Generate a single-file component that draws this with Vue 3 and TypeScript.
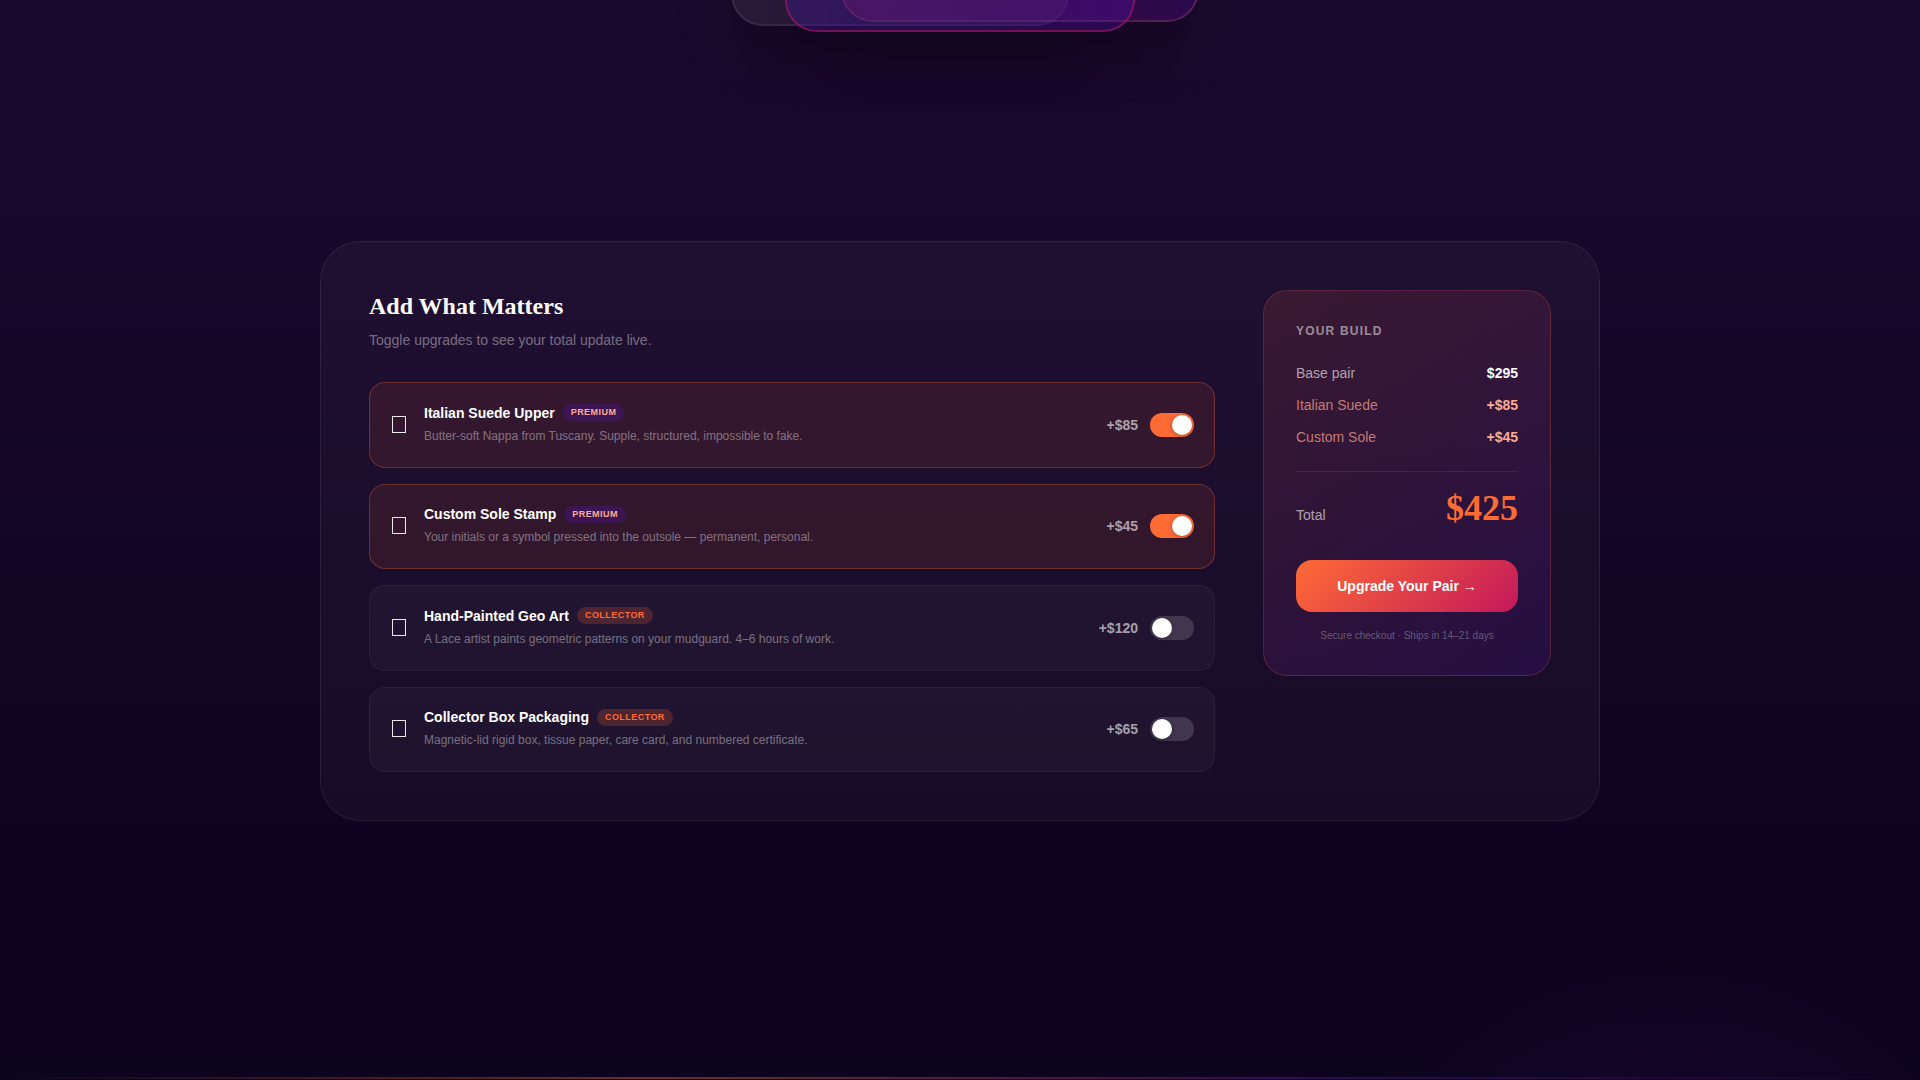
<script setup lang="ts">
import { computed, ref } from 'vue'

type Tier = 'Premium' | 'Collector'

interface Upgrade {
  id: string
  name: string
  short: string
  tier: Tier
  description: string
  price: number
  selected: boolean
}

const basePrice = 295

const upgrades = ref<Upgrade[]>([
  {
    id: 'suede',
    name: 'Italian Suede Upper',
    short: 'Italian Suede',
    tier: 'Premium',
    description: 'Butter-soft Nappa from Tuscany. Supple, structured, impossible to fake.',
    price: 85,
    selected: true,
  },
  {
    id: 'sole',
    name: 'Custom Sole Stamp',
    short: 'Custom Sole',
    tier: 'Premium',
    description: 'Your initials or a symbol pressed into the outsole — permanent, personal.',
    price: 45,
    selected: true,
  },
  {
    id: 'art',
    name: 'Hand-Painted Geo Art',
    short: 'Geo Art',
    tier: 'Collector',
    description: 'A Lace artist paints geometric patterns on your mudguard. 4–6 hours of work.',
    price: 120,
    selected: false,
  },
  {
    id: 'box',
    name: 'Collector Box Packaging',
    short: 'Collector Box',
    tier: 'Collector',
    description: 'Magnetic-lid rigid box, tissue paper, care card, and numbered certificate.',
    price: 65,
    selected: false,
  },
])

const chosen = computed(() => upgrades.value.filter((u) => u.selected))
const total = computed(() => chosen.value.reduce((sum, u) => sum + u.price, basePrice))
</script>

<template>
  <div class="page">
    <div class="stack" aria-hidden="true">
      <div class="sheet sheet-left"></div>
      <div class="sheet sheet-right"></div>
      <div class="sheet sheet-center"></div>
    </div>

    <main class="panel">
      <section class="options">
        <h2 class="heading">Add What Matters</h2>
        <p class="lead">Toggle upgrades to see your total update live.</p>

        <ul class="list">
          <li v-for="item in upgrades" :key="item.id">
            <label class="card" :class="{ active: item.selected }" :for="item.id">
              <svg class="icon" viewBox="0 0 18 24" aria-hidden="true">
                <rect x="2.5" y="3.5" width="13" height="16" fill="none" stroke="currentColor" />
              </svg>
              <span class="details">
                <span class="name-row">
                  <span class="name">{{ item.name }}</span>
                  <span class="badge" :class="item.tier.toLowerCase()">{{ item.tier }}</span>
                </span>
                <span class="description">{{ item.description }}</span>
              </span>
              <span class="price">+${{ item.price }}</span>
              <input :id="item.id" v-model="item.selected" class="toggle" type="checkbox" />
            </label>
          </li>
        </ul>
      </section>

      <aside class="summary">
        <h3 class="summary-title">Your Build</h3>
        <dl class="lines">
          <div class="line">
            <dt>Base pair</dt>
            <dd>${{ basePrice }}</dd>
          </div>
          <div v-for="item in chosen" :key="item.id" class="line added">
            <dt>{{ item.short }}</dt>
            <dd>+${{ item.price }}</dd>
          </div>
        </dl>
        <div class="total">
          <span class="total-label">Total</span>
          <output class="total-value">${{ total }}</output>
        </div>
        <button class="checkout" type="button">Upgrade Your Pair →</button>
        <p class="note">Secure checkout · Ships in 14–21 days</p>
      </aside>
    </main>

    <div class="divider"></div>
  </div>
</template>

<style>
body {
  margin: 0;
  background: #0d041c;
}
</style>

<style scoped>
* {
  box-sizing: border-box;
}

.page {
  position: relative;
  display: flex;
  flex-direction: column;
  min-height: 100vh;
  padding-bottom: 1px;
  overflow: hidden;
  font-family: 'Liberation Sans', Arial, sans-serif;
  font-size: 14px;
  line-height: 20px;
  color: #fff;
  background:
    radial-gradient(circle 352px at 87% 120%, rgba(74, 20, 140, 0.22), rgba(74, 20, 140, 0)),
    linear-gradient(180deg, #1a092c 0%, #17072a 25%, #0d031e 88%, #0d041e 100%);
}

/* Glass sheets trailing in from the section above */
.stack {
  position: relative;
  flex: none;
  width: 468px;
  height: 241px;
  margin: 0 auto;
}

.sheet {
  position: absolute;
  height: 200px;
  border: 2px solid rgba(255, 255, 255, 0.08);
  border-radius: 32px;
  box-shadow: 0 24px 60px rgba(0, 0, 0, 0.16);
}

.sheet-left {
  left: 5px;
  top: -174px;
  width: 338px;
  background: rgba(255, 255, 255, 0.07);
}

.sheet-right {
  left: 115px;
  top: -178px;
  width: 358px;
  border-color: rgba(255, 140, 140, 0.18);
  background: linear-gradient(100deg, rgba(140, 20, 90, 0.4), rgba(74, 14, 130, 0.4));
}

.sheet-center {
  left: 59px;
  top: -168px;
  width: 350px;
  border-color: rgba(194, 24, 91, 0.5);
  background: linear-gradient(100deg, rgba(60, 24, 140, 0.4), rgba(74, 14, 150, 0.4));
}

.panel {
  display: grid;
  grid-template-columns: minmax(0, 1fr) 288px;
  align-items: start;
  gap: 48px;
  width: 100%;
  max-width: 1280px;
  margin: 0 auto;
  padding: 48px;
  border: 1px solid rgba(255, 255, 255, 0.07);
  border-radius: 40px;
  background: rgba(255, 255, 255, 0.035);
}

.heading {
  margin: 0 0 8px;
  font-family: 'Liberation Serif', 'Times New Roman', serif;
  font-size: 24px;
  font-weight: 700;
  line-height: 32px;
}

.lead {
  margin: 0 0 32px;
  color: rgba(255, 255, 255, 0.4);
}

.list {
  display: grid;
  grid-auto-rows: 1fr;
  gap: 16px;
  min-height: 390px;
  margin: 0;
  padding: 0;
  list-style: none;
}

.card {
  display: flex;
  align-items: center;
  height: 100%;
  padding: 20px;
  border: 1px solid rgba(255, 255, 255, 0.05);
  border-radius: 16px;
  background: rgba(255, 255, 255, 0.03);
  cursor: pointer;
}

.card.active {
  border-color: rgba(255, 107, 53, 0.3);
  background: rgba(255, 107, 53, 0.1);
}

.icon {
  flex: none;
  width: 18px;
  height: 24px;
  margin-right: 16px;
  color: rgba(255, 255, 255, 0.9);
}

.details {
  flex: 1;
  display: flex;
  flex-direction: column;
  gap: 4px;
  min-width: 0;
}

.name-row {
  display: flex;
  align-items: center;
  gap: 8px;
  line-height: 18px;
}

.name {
  font-weight: 700;
}

.badge {
  padding: 0 8px;
  border-radius: 9px;
  font-size: 9px;
  font-weight: 700;
  line-height: 17px;
  letter-spacing: 0.05em;
  text-transform: uppercase;
}

.badge.premium {
  color: #ffab91;
  background: rgba(74, 20, 140, 0.4);
}

.badge.collector {
  color: #ff6b35;
  background: rgba(255, 107, 53, 0.2);
}

.description {
  font-size: 12px;
  color: rgba(255, 255, 255, 0.4);
}

.price {
  margin: 0 12px;
  font-weight: 700;
  color: rgba(255, 255, 255, 0.6);
}

.toggle {
  position: relative;
  flex: none;
  width: 44px;
  height: 24px;
  margin: 0;
  appearance: none;
  border-radius: 12px;
  background: rgba(255, 255, 255, 0.15);
  cursor: pointer;
}

.toggle::before {
  content: '';
  position: absolute;
  top: 2px;
  left: 2px;
  width: 20px;
  height: 20px;
  border-radius: 50%;
  background: #fff;
  box-shadow: 0 1px 4px rgba(0, 0, 0, 0.3);
}

.toggle:checked {
  background: #ff6b35;
}

.toggle:checked::before {
  left: 22px;
}

.summary {
  padding: 32px;
  border: 1px solid rgba(255, 107, 53, 0.2);
  border-radius: 24px;
  background: linear-gradient(145deg, rgba(255, 107, 53, 0.12), rgba(74, 20, 140, 0.26));
}

.summary-title {
  margin: 0 0 24px;
  font-size: 12px;
  line-height: 16px;
  letter-spacing: 0.1em;
  text-transform: uppercase;
  color: rgba(255, 255, 255, 0.5);
}

.lines {
  display: grid;
  gap: 12px;
  margin: 0 0 24px;
}

.line {
  display: flex;
  justify-content: space-between;
}

.line dt {
  color: rgba(255, 255, 255, 0.6);
}

.line dd {
  margin: 0;
  font-weight: 700;
}

.line.added dt {
  color: rgba(255, 171, 145, 0.7);
}

.line.added dd {
  color: #ffab91;
}

.total {
  display: flex;
  justify-content: space-between;
  align-items: baseline;
  margin-bottom: 32px;
  padding-top: 16px;
  border-top: 1px solid rgba(255, 255, 255, 0.08);
}

.total-label {
  color: rgba(255, 255, 255, 0.6);
}

.total-value {
  font-family: 'Liberation Serif', 'Times New Roman', serif;
  font-size: 36px;
  font-weight: 700;
  line-height: 40px;
  color: #ff6b35;
}

.checkout {
  display: block;
  width: 100%;
  height: 52px;
  padding: 0;
  border: 0;
  border-radius: 16px;
  font: inherit;
  font-weight: 700;
  color: #fff;
  background: linear-gradient(135deg, #ff6b35, #c2185b);
  cursor: pointer;
}

.note {
  margin: 16px 0 0;
  font-size: 10px;
  line-height: 15px;
  text-align: center;
  color: rgba(255, 255, 255, 0.3);
}

.divider {
  height: 2px;
  margin-top: auto;
  background: linear-gradient(90deg, transparent, #ff6b35, #6a1b9a, transparent);
  opacity: 0.4;
}

@media (max-width: 900px) {
  .panel {
    grid-template-columns: minmax(0, 1fr);
    padding: 24px;
  }
}
</style>
